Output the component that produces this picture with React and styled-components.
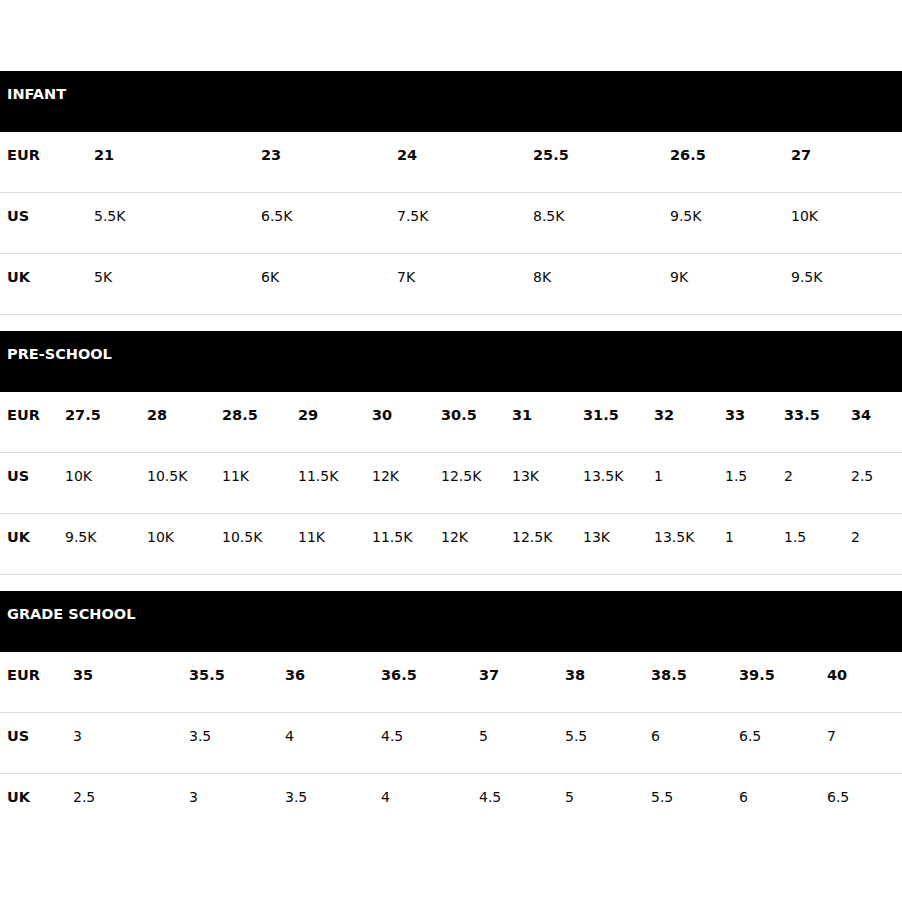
import React from 'react';
import styled, { createGlobalStyle } from 'styled-components';

const GlobalStyle = createGlobalStyle`
  body {
    margin: 0;
    background: #fff;
    font-family: 'DejaVu Sans', 'Liberation Sans', sans-serif;
    color: #0a0a0a;
  }
`;

const charts = [
  {
    title: 'INFANT',
    cols: '87px 167px 136px 136px 137px 121px 1fr',
    rows: [
      ['EUR', '21', '23', '24', '25.5', '26.5', '27'],
      ['US', '5.5K', '6.5K', '7.5K', '8.5K', '9.5K', '10K'],
      ['UK', '5K', '6K', '7K', '8K', '9K', '9.5K'],
    ],
  },
  {
    title: 'PRE-SCHOOL',
    cols: '58px 82px 75px 76px 74px 69px 71px 71px 71px 71px 59px 67px 1fr',
    rows: [
      ['EUR', '27.5', '28', '28.5', '29', '30', '30.5', '31', '31.5', '32', '33', '33.5', '34'],
      ['US', '10K', '10.5K', '11K', '11.5K', '12K', '12.5K', '13K', '13.5K', '1', '1.5', '2', '2.5'],
      ['UK', '9.5K', '10K', '10.5K', '11K', '11.5K', '12K', '12.5K', '13K', '13.5K', '1', '1.5', '2'],
    ],
  },
  {
    title: 'GRADE SCHOOL',
    cols: '66px 116px 96px 96px 98px 86px 86px 88px 88px 1fr',
    rows: [
      ['EUR', '35', '35.5', '36', '36.5', '37', '38', '38.5', '39.5', '40'],
      ['US', '3', '3.5', '4', '4.5', '5', '5.5', '6', '6.5', '7'],
      ['UK', '2.5', '3', '3.5', '4', '4.5', '5', '5.5', '6', '6.5'],
    ],
    last: true,
  },
];

const Page = styled.main`
  padding-top: 71px;
  display: flex;
  flex-direction: column;
  gap: 16px;
`;

const Table = styled.section`
  display: flex;
  flex-direction: column;
`;

const Header = styled.div`
  height: 61px;
  box-sizing: border-box;
  background: #000;
  color: #fff;
  padding: 15px 7px;
  font-size: 14.5px;
  font-weight: 700;
  line-height: 17px;
`;

const Row = styled.div`
  display: grid;
  grid-template-columns: ${p => p.$cols};
  height: 61px;
  box-sizing: border-box;
  border-bottom: 1px solid ${p => (p.$noLine ? 'transparent' : '#dcdcdc')};
`;

const Cell = styled.div`
  padding: 15px 7px;
  font-size: ${p => (p.$bold ? '14.5px' : '14px')};
  line-height: 17px;
  font-weight: ${p => (p.$bold ? 700 : 400)};
  white-space: nowrap;
`;

const SizeTable = ({ chart }) => (
  <Table>
    <Header>{chart.title}</Header>
    {chart.rows.map((row, i) => (
      <Row
        key={row[0]}
        $cols={chart.cols}
        $noLine={chart.last && i === chart.rows.length - 1}
      >
        {row.map((val, j) => (
          <Cell key={j} $bold={j === 0 || i === 0}>
            {val}
          </Cell>
        ))}
      </Row>
    ))}
  </Table>
);

const App = () => (
  <>
    <GlobalStyle />
    <Page>
      {charts.map(c => (
        <SizeTable key={c.title} chart={c} />
      ))}
    </Page>
  </>
);

export default App;
